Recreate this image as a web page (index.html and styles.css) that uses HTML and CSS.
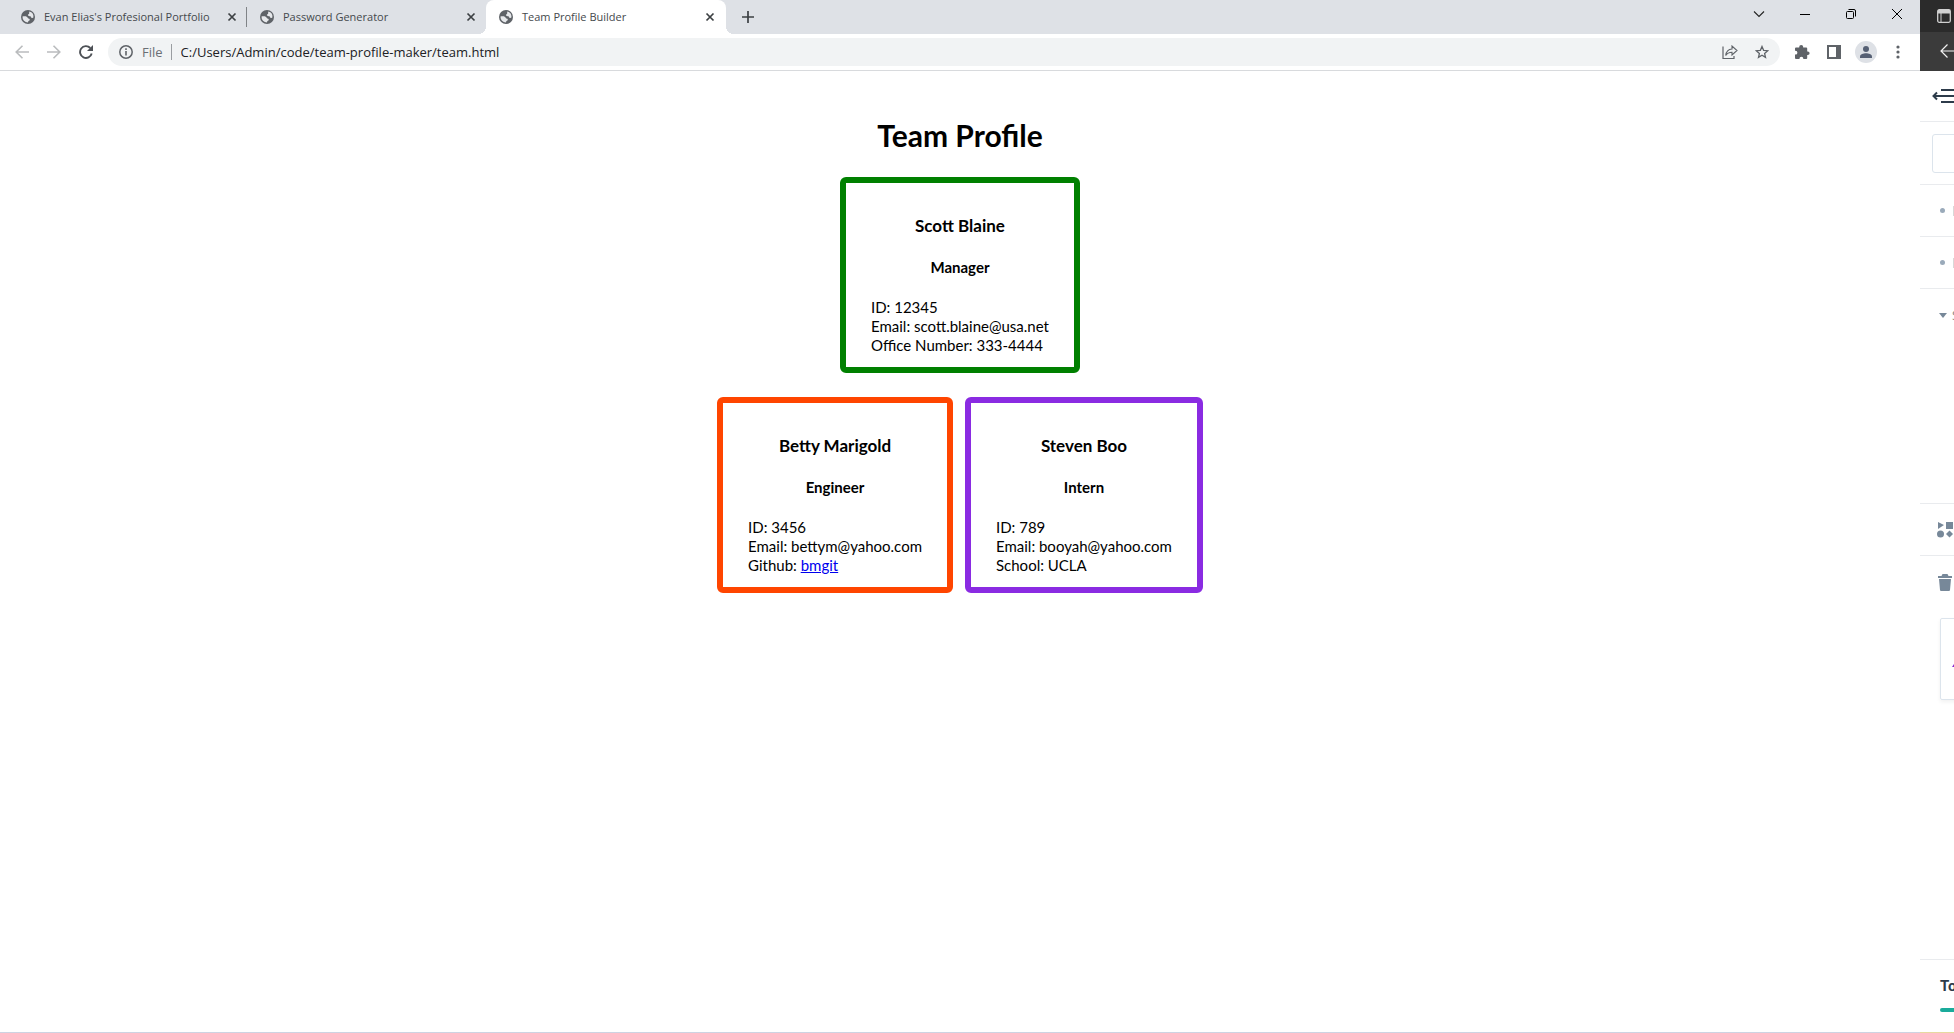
FILE: index.html
```html
<!DOCTYPE html>
<html lang="en">
<head>
<meta charset="utf-8">
<meta name="viewport" content="width=device-width, initial-scale=1">
<title>Team Profile Builder</title>
<link rel="stylesheet" href="styles.css">
</head>
<body>
<svg class="defs" aria-hidden="true">
  <symbol id="globe" viewBox="0 0 14 14">
    <circle cx="7" cy="7" r="7" fill="#5f6368"/>
    <path d="M8.300 1.600a5.500 5.500 0 0 1 4.100 6c-.5.500-1.300.6-1.900.2-.6-.4-.4-1.200-1.200-1.500-.8-.2-1.900 0-2.300-.8-.3-.8.300-1.300.9-1.600.7-.4 0-1.300.4-2.300zM1.500 6.600c1.500-.3 3.300-.4 4.500.3.900.5.800 1.400 1.700 1.700.7.200 1.200.5 1 1.300-.2.700-1.200.8-1.500 1.500l-.2 1.100A5.500 5.500 0 0 1 1.500 6.600z" fill="#e6e8eb"/>
  </symbol>
  <symbol id="close" viewBox="0 0 10 10"><path d="M1.500 1.500l7 7m0-7l-7 7" stroke="#3c4043" stroke-width="1.700"/></symbol>
</svg>
<div class="desktop">
  <div class="browser">
    <div class="tab-strip">
      <div class="tab divided">
        <svg class="favicon"><use href="#globe"/></svg>
        <span class="tab-title">Evan Elias's Profesional Portfolio</span>
        <button class="tab-close" aria-label="Close tab"><svg><use href="#close"/></svg></button>
      </div>
      <div class="tab">
        <svg class="favicon"><use href="#globe"/></svg>
        <span class="tab-title">Password Generator</span>
        <button class="tab-close" aria-label="Close tab"><svg><use href="#close"/></svg></button>
      </div>
      <div class="tab active">
        <svg class="favicon"><use href="#globe"/></svg>
        <span class="tab-title">Team Profile Builder</span>
        <button class="tab-close" aria-label="Close tab"><svg><use href="#close"/></svg></button>
      </div>
      <button class="new-tab" aria-label="New tab"><svg width="12" height="12" viewBox="0 0 12 12"><path d="M6 0v12M0 6h12" stroke="#3c4043" stroke-width="1.700"/></svg></button>
      <div class="window-controls">
        <button aria-label="Search tabs"><svg width="12" height="12" viewBox="0 0 12 12"><path d="M1 3.500l5 5 5-5" fill="none" stroke="#222" stroke-width="1.100"/></svg></button>
        <button aria-label="Minimize"><svg width="10" height="10" viewBox="0 0 10 10"><path d="M0 5.500h10" stroke="#000"/></svg></button>
        <button aria-label="Restore"><svg width="10" height="10" viewBox="0 0 10 10"><rect x=".5" y="2.500" width="7" height="7" rx="1" fill="none" stroke="#000"/><path d="M2.500.5H8A1.500 1.500 0 0 1 9.500 2v5.500" fill="none" stroke="#000"/></svg></button>
        <button aria-label="Close"><svg width="10" height="10" viewBox="0 0 10 10"><path d="M0 0l10 10m0-10L0 10" stroke="#000"/></svg></button>
      </div>
    </div>
    <div class="toolbar">
      <div class="tools">
        <button aria-label="Back"><svg width="14" height="14" viewBox="0 0 14 14"><path d="M14 7H1.500M7.500.7L1.200 7l6.300 6.300" fill="none" stroke="#babcbe" stroke-width="1.600"/></svg></button>
        <button aria-label="Forward"><svg width="14" height="14" viewBox="0 0 14 14"><path d="M0 7h12.500M6.500.7L12.800 7l-6.300 6.300" fill="none" stroke="#babcbe" stroke-width="1.600"/></svg></button>
        <button aria-label="Reload"><svg width="14" height="14" viewBox="0 0 14 14"><path d="M12.700 8.500A5.900 5.900 0 1 1 11.300 3" fill="none" stroke="#4d5156" stroke-width="1.900"/><path d="M14 0v6H8z" fill="#4d5156"/></svg></button>
      </div>
      <div class="omnibox">
        <svg width="14" height="14" viewBox="0 0 14 14"><circle cx="7" cy="7" r="6.200" fill="none" stroke="#5f6368" stroke-width="1.500"/><path d="M7 6v4.500M7 3.300v1.600" stroke="#5f6368" stroke-width="1.600"/></svg>
        <label class="scheme" for="url">File</label>
        <input class="url" id="url" type="text" value="C:/Users/Admin/code/team-profile-maker/team.html">
        <div class="tools">
          <button aria-label="Share"><svg width="16" height="14" viewBox="0 0 16 14"><path d="M1 1.500v12h11V11" fill="none" stroke="#5f6368" stroke-width="1.200"/><path d="M3.700 10.500C4.200 6.300 6.400 4.200 10 4V1l5 4.500L10 10V7.200c-3 0-4.900.9-6.300 3.300z" fill="none" stroke="#5f6368" stroke-width="1.100"/></svg></button>
          <button aria-label="Bookmark"><svg width="14" height="14" viewBox="0 0 14 14"><path d="M7 1.500l1.600 3.800 4.100.4-3.100 2.700.9 4L7 10.300l-3.500 2.100.9-4L1.300 5.700l4.100-.4z" fill="none" stroke="#5f6368" stroke-width="1.300"/></svg></button>
        </div>
      </div>
      <div class="tools">
        <button aria-label="Extensions"><svg width="16" height="16" viewBox="0 0 16 16"><path d="M1 4.500a1 1 0 0 1 1-1h3.200V3a2 2 0 0 1 4 0v.5h3a1 1 0 0 1 1 1v3h.6a1.800 1.800 0 0 1 0 3.600h-.6V14a1 1 0 0 1-1 1H9.300v-.4a1.900 1.900 0 0 0-3.800 0v.4H2a1 1 0 0 1-1-1v-3.400h.500a1.900 1.900 0 0 0 0-3.800H1z" fill="#5f6368"/></svg></button>
        <button aria-label="Side panel"><svg width="14" height="14" viewBox="0 0 14 14"><path d="M0 0h14v14H0zM2 2v10h7V2z" fill="#5f6368" fill-rule="evenodd"/></svg></button>
        <button aria-label="Profile"><svg width="22" height="22" viewBox="0 0 22 22"><circle cx="11" cy="11" r="11" fill="#dee1e6"/><circle cx="11" cy="8" r="3" fill="#566074"/><path d="M5 17v-1.500c0-2.300 3.500-3.300 6-3.300s6 1 6 3.300V17z" fill="#566074"/></svg></button>
        <button aria-label="Menu"><svg width="4" height="14" viewBox="0 0 4 14"><g fill="#5f6368"><circle cx="2" cy="2" r="1.600"/><circle cx="2" cy="7" r="1.600"/><circle cx="2" cy="12" r="1.600"/></g></svg></button>
      </div>
    </div>
    <main class="page">
      <h1>Team Profile</h1>
      <section class="team-row">
        <article class="card manager">
          <h2>Scott Blaine</h2>
          <h3>Manager</h3>
          <ul>
            <li>ID: 12345</li>
            <li>Email: scott.blaine@usa.net</li>
            <li>Office Number: 333-4444</li>
          </ul>
        </article>
      </section>
      <section class="team-row">
        <article class="card engineer">
          <h2>Betty Marigold</h2>
          <h3>Engineer</h3>
          <ul>
            <li>ID: 3456</li>
            <li>Email: bettym@yahoo.com</li>
            <li>Github: <a href="#bmgit">bmgit</a></li>
          </ul>
        </article>
        <article class="card intern">
          <h2>Steven Boo</h2>
          <h3>Intern</h3>
          <ul>
            <li>ID: 789</li>
            <li>Email: booyah@yahoo.com</li>
            <li>School: UCLA</li>
          </ul>
        </article>
      </section>
    </main>
  </div>
  <aside class="neighbor">
    <div class="neighbor-title"><svg width="14" height="14" viewBox="0 0 14 14"><rect x=".7" y=".7" width="12.600" height="12.600" rx="1.500" fill="none" stroke="#d0d0d0" stroke-width="1.300"/><path d="M1 1h12v3.500H1z" fill="#d0d0d0"/><path d="M4 4v9" stroke="#d0d0d0"/></svg></div>
    <div class="neighbor-nav"><button aria-label="Back"><svg width="16" height="14" viewBox="0 0 16 14"><path d="M16 7H1M7.500.5L1 7l6.500 6.500" fill="none" stroke="#f2f2f2" stroke-width="1.200"/></svg></button></div>
    <div class="row toggle"><button aria-label="Collapse menu"><svg width="24" height="16" viewBox="0 0 24 16"><path d="M9 2h15M1 8h23M9 14h15M5 4.500L1.500 8 5 11.500" fill="none" stroke="#2d3b4a" stroke-width="2"/></svg></button></div>
    <div class="row search"><input type="text" aria-label="Search"></div>
    <div class="row"><span class="dot"></span><span class="edge"></span></div>
    <div class="row"><span class="dot"></span><span class="edge"></span></div>
    <div class="row open"><span class="caret"></span><span class="letter">S</span></div>
    <div class="row icon-row"><svg width="16" height="17" viewBox="0 0 16 17"><g fill="#778899"><path d="M1 1l6 3-6 4zM9 1h7v7H9z"/><circle cx="3.500" cy="13" r="3.500"/><path d="M12.500 9.500L16 13l-3.500 3.500L9 13z"/></g></svg></div>
    <div class="row icon-row last"><svg width="14" height="17" viewBox="0 0 14 17"><path d="M4.500 0h5l1 2H14v2H0V2h3.500zM1 5h12l-1 11q-.1 1-1 1H3q-.9 0-1-1z" fill="#778899"/></svg></div>
    <div class="tile"><svg width="4" height="8" viewBox="0 0 4 8"><path d="M4 0v6H0z" fill="#8a2bd2"/></svg></div>
    <div class="totals"><strong>To</strong><div class="meter"></div></div>
  </aside>
</div>
</body>
</html>
```
FILE: styles.css
```css
* { box-sizing: border-box; }

body {
  margin: 0;
  background: #fff;
  font-family: "Open Sans", sans-serif;
}

button {
  display: flex;
  align-items: center;
  justify-content: center;
  padding: 0;
  border: 0;
  background: none;
}

svg { display: block; flex: none; }

.defs { position: absolute; width: 0; height: 0; }

.desktop {
  display: grid;
  grid-template-columns: minmax(0, 1fr) 34px;
  min-height: 100vh;
}

.browser {
  display: flex;
  flex-direction: column;
  border-bottom: 1px solid #cdd3e2;
}

/* Tabs */
.tab-strip {
  display: flex;
  height: 34px;
  padding-left: 8px;
  background: #dee1e6;
}

.tab {
  position: relative;
  display: flex;
  align-items: center;
  gap: 9px;
  width: 239px;
  padding: 0 10px 0 13px;
  color: #45494d;
  font-size: 11px;
}

.tab.divided::after {
  content: "";
  position: absolute;
  right: 0;
  top: 7px;
  width: 1px;
  height: 20px;
  background: #808387;
}

.tab.active { width: 240px; padding-right: 11px; background: #fff; border-radius: 8px 8px 0 0; }

.tab.active::before,
.tab.active::after {
  content: "";
  position: absolute;
  bottom: 0;
  width: 8px;
  height: 8px;
}

.tab.active::before { right: 100%; background: radial-gradient(circle at 0 0, #dee1e6 8px, #fff 8px); }
.tab.active::after { left: 100%; background: radial-gradient(circle at 100% 0, #dee1e6 8px, #fff 8px); }

.favicon { width: 14px; height: 14px; }
.tab-title { flex: 1; padding-bottom: 2px; white-space: nowrap; }
.tab-close svg { width: 10px; height: 10px; }
.new-tab { width: 44px; }

.window-controls { display: flex; height: 28px; margin-left: auto; }
.window-controls button { width: 46px; }

/* Toolbar */
.toolbar {
  display: flex;
  align-items: center;
  gap: 6px;
  height: 37px;
  padding: 0 6px;
  border-bottom: 1px solid #d8dadd;
}

.tools { display: flex; }
.tools button { width: 32px; height: 28px; }

.omnibox {
  display: flex;
  flex: 1;
  align-items: center;
  height: 28px;
  padding: 0 2px 0 11px;
  border-radius: 14px;
  background: #f1f3f4;
  font-size: 13px;
}

.scheme {
  margin-left: 9px;
  padding-right: 8px;
  border-right: 1px solid #9a9da1;
  color: #6b6f74;
  line-height: 16px;
}

.url {
  flex: 1;
  min-width: 0;
  padding: 0 0 0 9px;
  border: 0;
  background: none;
  color: #202124;
  font: inherit;
}

/* Team page */
.page {
  flex: 1;
  padding: 45px 16px 0;
  color: #000;
  font-family: Lato, sans-serif;
  font-size: 15px;
  line-height: 19px;
}

.page h1 {
  margin: 0 0 22px;
  font-size: 30px;
  line-height: 39px;
  text-align: center;
}

.team-row {
  display: flex;
  justify-content: center;
  gap: 12px;
  margin-bottom: 24px;
}

.card {
  padding: 31px 25px 12px;
  border: 6px solid;
  border-radius: 6px;
}

.manager { border-color: #008000; }
.engineer { border-color: #ff4500; }
.intern { border-color: #8a2be2; }

.card h2 {
  margin: 0 0 20px;
  font-size: 17px;
  line-height: 23px;
  text-align: center;
}

.card h3 {
  margin: 0 0 21px;
  font-size: 15px;
  line-height: 20px;
  text-align: center;
}

.card ul { margin: 0; padding: 0; list-style: none; }
.card a { color: #0000ee; }

/* Window alongside the browser */
.neighbor {
  display: flex;
  flex-direction: column;
  overflow: hidden;
  border-bottom: 1px solid #e6d9a0;
}

.neighbor-title,
.neighbor-nav { display: flex; align-items: center; }
.neighbor-title { height: 32px; padding-left: 17px; background: #2b2b2b; }
.neighbor-nav { height: 39px; padding: 0 0 2px 20px; background: #3b3b3b; }

.row {
  display: flex;
  align-items: center;
  height: 52px;
  padding-left: 20px;
  border-bottom: 1px solid #e9ebee;
}

.row.toggle { height: 51px; padding-left: 12px; }
.row.search { height: 63px; padding-left: 12px; }
.row.icon-row { padding-left: 17px; }
.row.last { padding-left: 18px; border: 0; }

.row.search input {
  flex: none;
  width: 160px;
  height: 39px;
  border: 1px solid #dce4ec;
  border-radius: 3px;
}

.row.open {
  align-items: flex-start;
  height: 215px;
  padding: 16px 0 0 19px;
}

.dot { width: 5px; height: 5px; border-radius: 50%; background: #9aaaba; }
.edge { width: 1px; height: 10px; margin-left: 8px; background: #d8d8d8; }

.caret {
  flex: none;
  margin: 8px 5px 0 0;
  border: solid transparent;
  border-width: 5px 4px 0;
  border-top-color: #778899;
}

.letter { color: #888; font-size: 13px; line-height: 20px; }

.tile {
  display: flex;
  align-items: center;
  flex: none;
  width: 160px;
  height: 82px;
  margin: 10px 0 0 20px;
  padding: 12px 0 0 11px;
  border: 1px solid #dce4ec;
  border-radius: 2px;
  box-shadow: 0 2px 4px #0000000f;
}

.totals {
  height: 73px;
  margin-top: auto;
  padding: 16px 0 0 20px;
  border-top: 1px solid #e9ebee;
  color: #2d3b4a;
  font-family: Roboto, sans-serif;
  font-size: 15px;
  line-height: 20px;
}

.meter { width: 160px; height: 4px; margin-top: 12px; border-radius: 2px; background: #1aab9b; }
```
